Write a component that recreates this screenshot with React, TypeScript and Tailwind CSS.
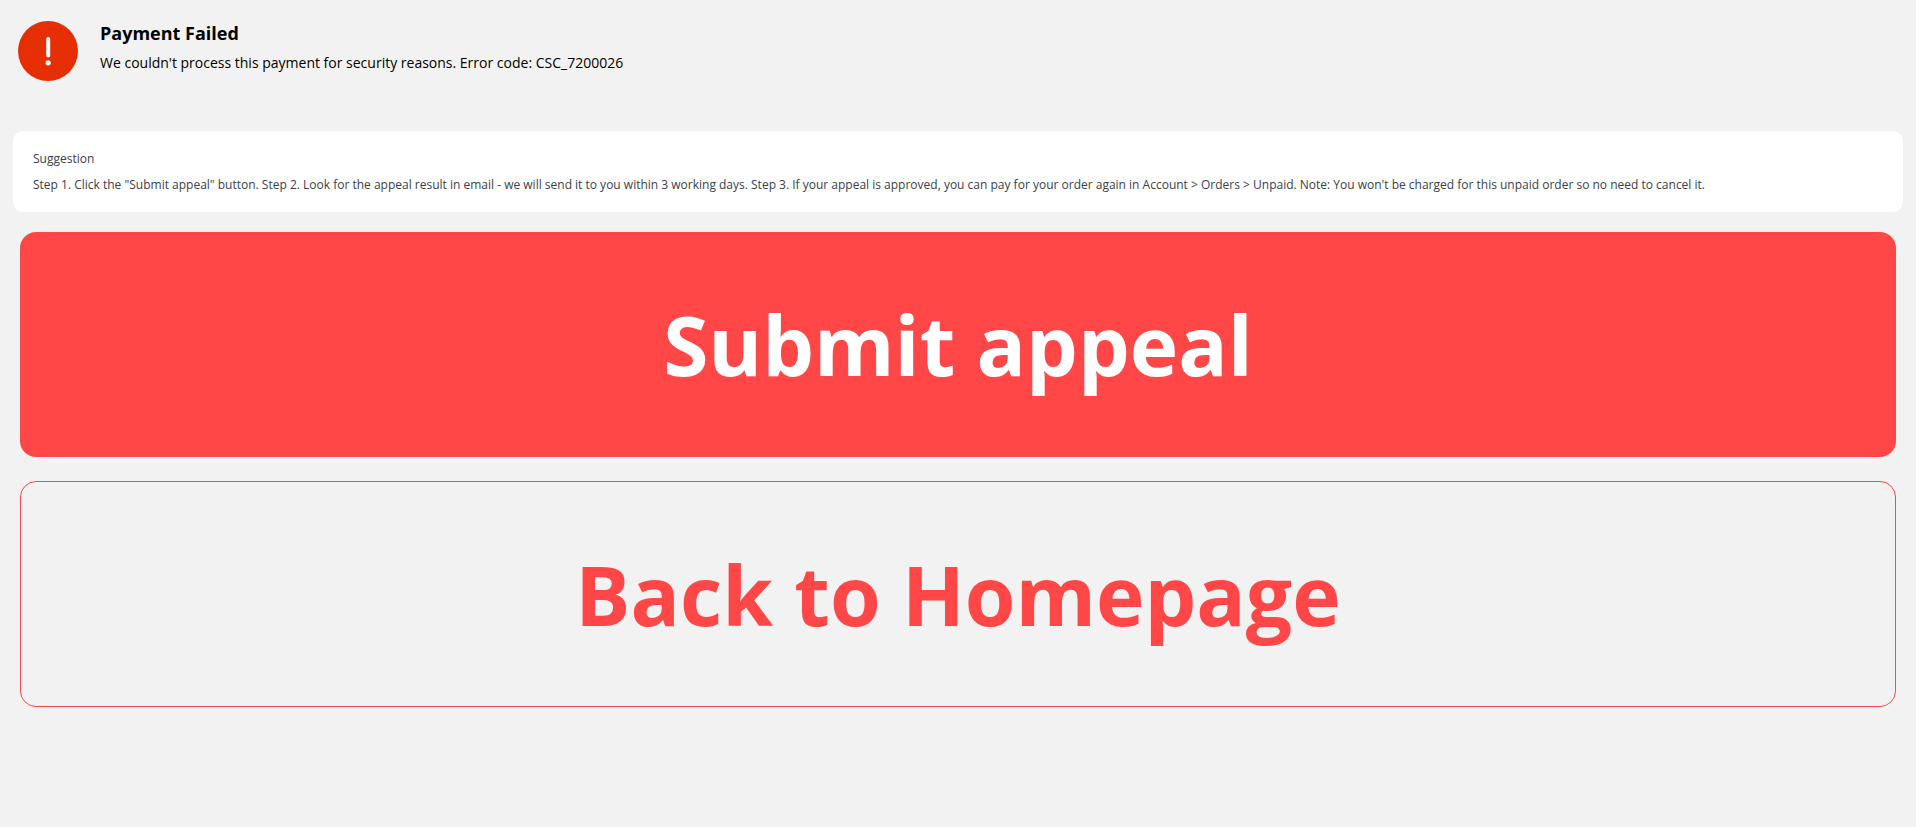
function AlertIcon() {
    return (
        <svg className="size-15 shrink-0" viewBox="0 0 60 60" aria-hidden="true">
            <circle cx="30" cy="30" r="30" fill="#e62e04" />
            <path d="M30.2 18v16.5" stroke="#fff" strokeWidth="4" strokeLinecap="round" />
            <circle cx="30.2" cy="41.8" r="2.6" fill="#fff" />
        </svg>
    );
}

export default function App() {
    return (
        <main className="min-h-screen bg-[#f2f2f2] font-['Open_Sans',sans-serif] text-black">
            <header className="flex gap-[22px] px-[18px] pt-[21px] pb-[50px]">
                <AlertIcon />
                <div>
                    <h1 className="text-lg leading-6 font-bold">Payment Failed</h1>
                    <p className="mt-1.5 text-sm leading-6">
                        We couldn't process this payment for security reasons. Error code: CSC_7200026
                    </p>
                </div>
            </header>

            <section className="mx-[13px] rounded-[10px] bg-white px-5 pt-[15px] pb-[14px] text-xs leading-[26px] text-[#3a3e4a]">
                <h2>Suggestion</h2>
                <p>
                    Step 1. Click the "Submit appeal" button. Step 2. Look for the appeal result in email - we will send it to you within 3 working days. Step 3. If your appeal is approved, you can pay for your order again in Account &gt; Orders &gt; Unpaid. Note: You won't be charged for this unpaid order so no need to cancel it.
                </p>
            </section>

            <div className="flex flex-col gap-6 px-5 pt-5 pb-6">
                <button type="button" className="h-[225px] rounded-2xl bg-[#ff4747] text-[82px] font-bold text-white">
                    Submit appeal
                </button>
                <button type="button" className="h-[226px] rounded-2xl border border-[#ff4747] text-[82px] font-bold text-[#ff4747]">
                    Back to Homepage
                </button>
            </div>
        </main>
    );
}
